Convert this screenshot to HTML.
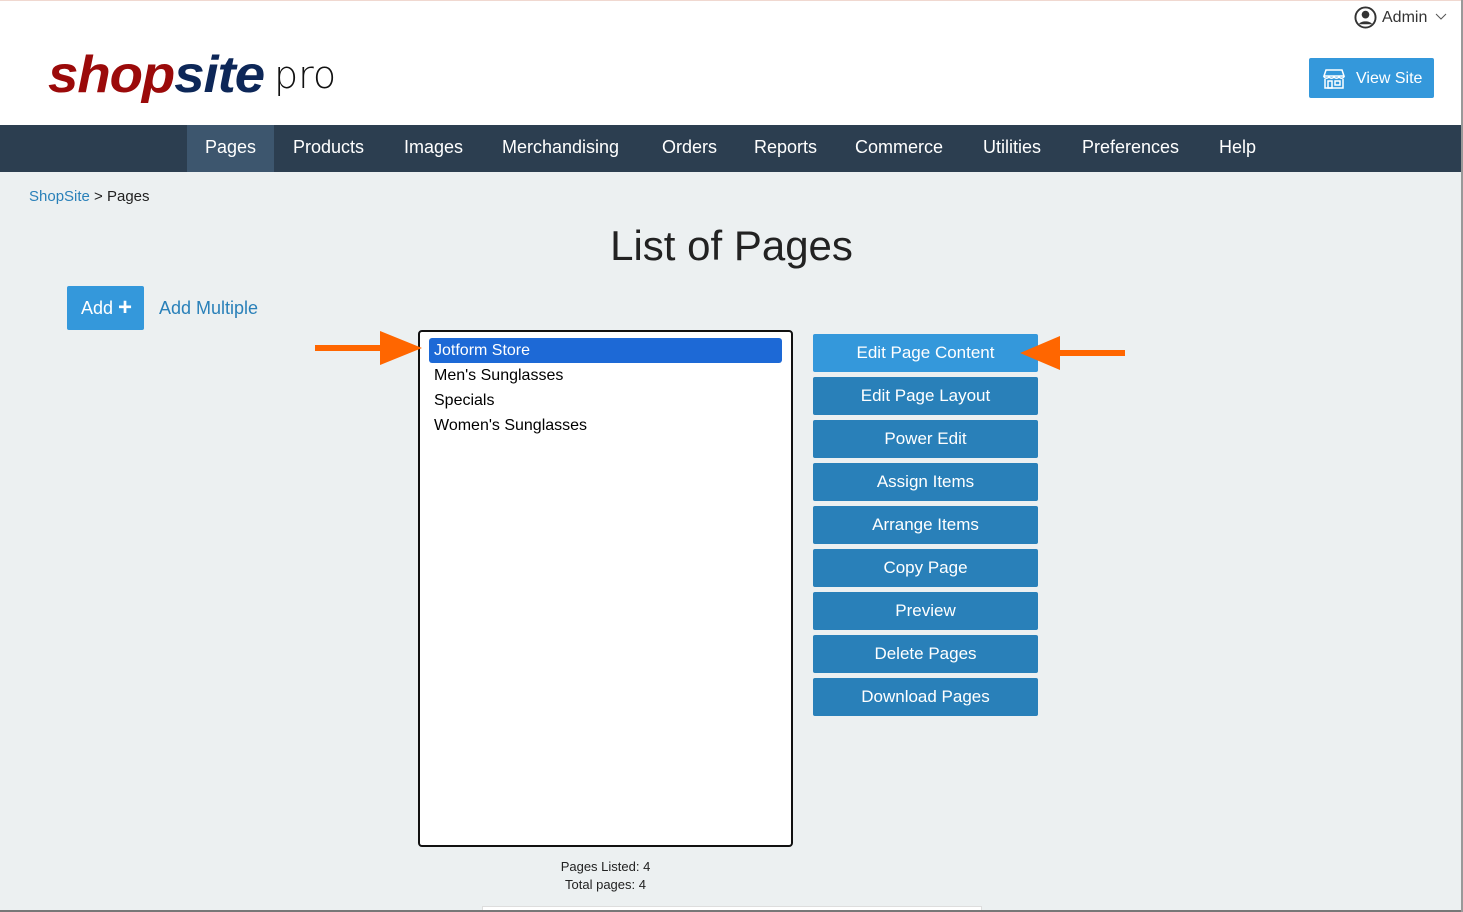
<!DOCTYPE html>
<html><head><meta charset="utf-8"><style>
*{box-sizing:border-box;margin:0;padding:0}
body{width:1463px;height:912px;overflow:hidden;background:#ecf0f1;font-family:"Liberation Sans","DejaVu Sans",sans-serif;position:relative}
.hdr{position:absolute;left:0;top:0;width:1463px;height:125px;background:#fff;border-top:1px solid #f0d8d0}
.nav{position:absolute;left:0;top:125px;width:1463px;height:47px;background:#2c3e50}
.nav span{position:absolute;top:0;height:47px;line-height:45px;color:#fff;font-size:18px;padding:0 18px}
.btn{position:absolute;left:813px;width:225px;height:38px;background:#2980b9;color:#fff;font-size:17px;text-align:center;line-height:38px;border-radius:2px}
.list{position:absolute;left:418px;top:330px;width:375px;height:517px;background:#fff;border:2px solid #111;border-radius:4px}
.it{position:absolute;left:14px;font-size:16px;color:#000}
</style></head><body>
<div class="hdr">
 <div style="position:absolute;left:48px;top:44px;font-size:52px;font-weight:bold;font-style:italic;letter-spacing:-1px;line-height:60px;transform:scaleX(1.05);transform-origin:left"><span style="color:#9b0a0a">shop</span><span style="color:#0d2758">site</span></div>
 <div style="position:absolute;left:274px;top:52px;font-size:38px;color:#111;line-height:44px;font-family:'DejaVu Sans',sans-serif;font-weight:200;-webkit-text-stroke:0">pro</div>
 <svg style="position:absolute;left:1354px;top:5px" width="23" height="23" viewBox="0 0 24 24"><circle cx="12" cy="12" r="10.5" fill="none" stroke="#333" stroke-width="2"/><circle cx="12" cy="9" r="4" fill="#333"/><path d="M5 19c2-4 12-4 14 0" fill="#333"/></svg>
 <div style="position:absolute;left:1382px;top:8px;font-size:16px;color:#333">Admin</div>
 <svg style="position:absolute;left:1435px;top:12px" width="12" height="8"><path d="M1 1l5 5 5-5" fill="none" stroke="#555"/></svg>
 <div style="position:absolute;left:1309px;top:57px;width:125px;height:40px;background:#3498db;border-radius:2px;color:#fff;font-size:16px;line-height:42px;padding-left:47px">View Site</div>
 <svg style="position:absolute;left:1323px;top:68px" width="22" height="20" viewBox="0 0 22 20" fill="none" stroke="#fff" stroke-width="1.5"><path d="M3 1h16l2 6H1z"/><path d="M1 7c0 3 5 3 5 0c0 3 5 3 5 0c0 3 5 3 5 0c0 3 5 3 5 0"/><path d="M2 10v9h18v-9"/><rect x="5" y="12" width="4" height="7"/><rect x="12" y="12" width="5" height="4"/></svg>
</div>
<div class="nav">
 <span style="left:187px;background:#3d566e">Pages</span>
 <span style="left:275px">Products</span>
 <span style="left:386px">Images</span>
 <span style="left:484px">Merchandising</span>
 <span style="left:644px">Orders</span>
 <span style="left:736px">Reports</span>
 <span style="left:837px">Commerce</span>
 <span style="left:965px">Utilities</span>
 <span style="left:1064px">Preferences</span>
 <span style="left:1201px">Help</span>
</div>
<div style="position:absolute;left:29px;top:188px;font-size:15px;color:#222"><span style="color:#2980b9">ShopSite</span> &gt; Pages</div>
<div style="position:absolute;left:0;width:1463px;top:222px;text-align:center;font-size:42px;color:#222">List of Pages</div>
<div style="position:absolute;left:67px;top:286px;width:77px;height:44px;background:#3498db;border-radius:2px;color:#fff;font-size:18px;line-height:44px;padding-left:14px">Add <span style="font-size:24px;font-weight:bold;vertical-align:-1px">+</span></div>
<div style="position:absolute;left:159px;top:298px;font-size:18px;color:#2980b9">Add Multiple</div>
<div class="list">
 <div style="position:absolute;left:9px;top:6px;width:353px;height:25px;background:#1d69d6;border-radius:3px"></div>
 <div class="it" style="top:10px;color:#fff">Jotform Store</div>
 <div class="it" style="top:35px">Men's Sunglasses</div>
 <div class="it" style="top:60px">Specials</div>
 <div class="it" style="top:85px">Women's Sunglasses</div>
</div>
<svg style="position:absolute;left:310px;top:330px" width="115" height="36"><path d="M5 15h65v-14l42 17-42 17v-14h-65z" fill="#f60"/></svg>
<div class="btn" style="top:334px;background:#3498db">Edit Page Content</div>
<div class="btn" style="top:377px">Edit Page Layout</div>
<div class="btn" style="top:420px">Power Edit</div>
<div class="btn" style="top:463px">Assign Items</div>
<div class="btn" style="top:506px">Arrange Items</div>
<div class="btn" style="top:549px">Copy Page</div>
<div class="btn" style="top:592px">Preview</div>
<div class="btn" style="top:635px">Delete Pages</div>
<div class="btn" style="top:678px">Download Pages</div>
<svg style="position:absolute;left:1015px;top:335px" width="115" height="36"><path d="M110 15h-65v-14l-40 17 40 17v-14h65z" fill="#f60"/></svg>
<div style="position:absolute;left:418px;width:375px;top:858px;text-align:center;font-size:13px;color:#222;line-height:18px">Pages Listed: 4<br>Total pages: 4</div>
<div style="position:absolute;left:482px;top:906px;width:500px;height:6px;background:#fff;border:1px solid #ddd"></div>
<div style="position:absolute;left:0;top:910px;width:1463px;height:2px;background:#777"></div>
<div style="position:absolute;left:1461px;top:0;width:2px;height:912px;background:#999"></div>
</body></html>
